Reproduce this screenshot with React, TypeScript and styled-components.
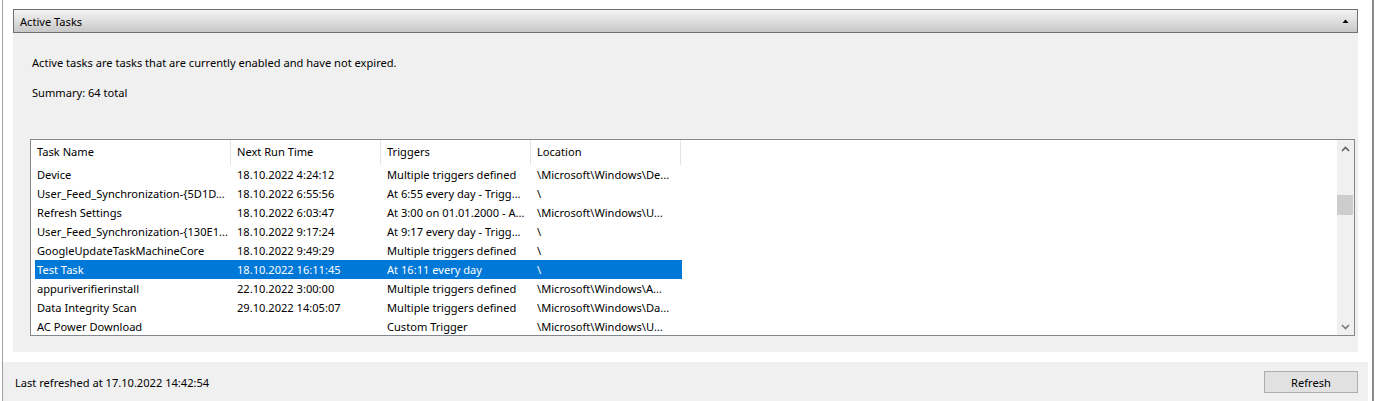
import React from 'react'
import styled, { createGlobalStyle } from 'styled-components'

const GlobalStyle = createGlobalStyle`
  html, body {
    margin: 0;
    padding: 0;
    background: #ffffff;
  }
  body {
    font-family: "Noto Sans", "Segoe UI", "Liberation Sans", sans-serif;
    font-size: 11.1px;
    color: #000000;
  }
  * {
    box-sizing: border-box;
  }
`

const Root = styled.div`
  display: flex;
  width: 1374px;
  height: 401px;
  padding-left: 2px;
  border-right: 2px solid #8c8c8c;
  background: #ffffff;
  overflow: hidden;
`

const Window = styled.div`
  display: flex;
  flex-direction: column;
  width: 1366px;
  height: 100%;
  border-left: 1px solid #a0a0a0;
`

const Main = styled.div`
  flex: 1;
  display: flex;
  padding: 9px 10px 10px 10px;
`

const Panel = styled.section`
  flex: 1;
  display: flex;
  flex-direction: column;
`

const PanelHeader = styled.div`
  display: flex;
  align-items: center;
  justify-content: space-between;
  height: 24px;
  padding: 0 8px 0 6px;
  border: 1px solid #6f6f6f;
  background: linear-gradient(to bottom, #f4f4f4 0%, #dedede 50%, #c8c8c8 100%);
`

const PanelBody = styled.div`
  flex: 1;
  display: flex;
  flex-direction: column;
  padding: 22px 3px 16px 17px;
  background: #f0f0f0;
`

const Note = styled.div<{ $gap?: number }>`
  padding-left: 2px;
  line-height: 16px;
  margin-bottom: ${({ $gap }) => $gap ?? 0}px;
`

const ListView = styled.div`
  display: flex;
  height: 197px;
  border: 1px solid #828790;
  background: #ffffff;
`

const ListContent = styled.div`
  flex: 1;
  overflow: hidden;
`

const HeaderRow = styled.div`
  display: grid;
  grid-template-columns: 200px 150px 150px 150px;
  height: 25px;
`

const HeaderCell = styled.div`
  display: flex;
  align-items: center;
  padding: 0 0 2px 6px;
  border-right: 1px solid #e5e5e5;
  white-space: nowrap;
`

const Row = styled.div<{ $selected?: boolean }>`
  display: grid;
  grid-template-columns: 195px 150px 150px 152px;
  width: 647px;
  height: 19px;
  margin-left: 4px;
  background: ${({ $selected }) => ($selected ? '#0078d7' : 'transparent')};
  color: ${({ $selected }) => ($selected ? '#ffffff' : '#000000')};
`

const Cell = styled.div<{ $first?: boolean }>`
  display: flex;
  align-items: center;
  padding-left: ${({ $first }) => ($first ? 2 : 7)}px;
  white-space: nowrap;
  overflow: hidden;
`

const ScrollBar = styled.div`
  display: flex;
  flex-direction: column;
  width: 17px;
  background: #f0f0f0;
`

const ScrollButton = styled.div`
  display: flex;
  align-items: center;
  justify-content: center;
  height: 17px;
`

const ScrollTrack = styled.div`
  flex: 1;
`

const Thumb = styled.div`
  width: 16px;
  height: 20px;
  margin-top: 38px;
  background: #cdcdcd;
`

const Footer = styled.footer`
  display: flex;
  align-items: center;
  justify-content: space-between;
  height: 39px;
  padding: 1px 10px 0 12px;
  background: #f0f0f0;
`

const Button = styled.button`
  width: 94px;
  height: 22px;
  padding: 0;
  border: 1px solid #adadad;
  background: #e1e1e1;
  font: inherit;
  color: #000000;
`

const rows = [
  ['Device', '18.10.2022 4:24:12', 'Multiple triggers defined', '\\Microsoft\\Windows\\De...'],
  ['User_Feed_Synchronization-{5D1D...', '18.10.2022 6:55:56', 'At 6:55 every day - Trigg...', '\\'],
  ['Refresh Settings', '18.10.2022 6:03:47', 'At 3:00 on 01.01.2000 - A...', '\\Microsoft\\Windows\\U...'],
  ['User_Feed_Synchronization-{130E1...', '18.10.2022 9:17:24', 'At 9:17 every day - Trigg...', '\\'],
  ['GoogleUpdateTaskMachineCore', '18.10.2022 9:49:29', 'Multiple triggers defined', '\\'],
  ['Test Task', '18.10.2022 16:11:45', 'At 16:11 every day', '\\'],
  ['appuriverifierinstall', '22.10.2022 3:00:00', 'Multiple triggers defined', '\\Microsoft\\Windows\\A...'],
  ['Data Integrity Scan', '29.10.2022 14:05:07', 'Multiple triggers defined', '\\Microsoft\\Windows\\Da...'],
  ['AC Power Download', '', 'Custom Trigger', '\\Microsoft\\Windows\\U...'],
]

const columns = ['Task Name', 'Next Run Time', 'Triggers', 'Location']

const SELECTED = 5

const App = () => {
  return (
    <>
      <GlobalStyle />
      <Root>
        <Window>
          <Main>
            <Panel>
              <PanelHeader>
                <span>Active Tasks</span>
                <svg width="7" height="4" viewBox="0 0 7 4">
                  <path d="M3.5 0.5 L6.5 4 L0.5 4 Z" fill="#000000" />
                </svg>
              </PanelHeader>
              <PanelBody>
                <Note $gap={14}>Active tasks are tasks that are currently enabled and have not expired.</Note>
                <Note $gap={38}>Summary: 64 total</Note>
                <ListView>
                  <ListContent>
                    <HeaderRow>
                      {columns.map((c) => (
                        <HeaderCell key={c}>{c}</HeaderCell>
                      ))}
                    </HeaderRow>
                    {rows.map((r, i) => (
                      <Row key={i} $selected={i === SELECTED}>
                        {r.map((v, j) => (
                          <Cell key={j} $first={j === 0}>
                            {v}
                          </Cell>
                        ))}
                      </Row>
                    ))}
                  </ListContent>
                  <ScrollBar>
                    <ScrollButton>
                      <svg width="9" height="6" viewBox="0 0 9 6">
                        <path d="M1 5 L4.5 1.5 L8 5" fill="none" stroke="#606060" strokeWidth="1.6" />
                      </svg>
                    </ScrollButton>
                    <ScrollTrack>
                      <Thumb />
                    </ScrollTrack>
                    <ScrollButton>
                      <svg width="9" height="6" viewBox="0 0 9 6">
                        <path d="M1 1 L4.5 4.5 L8 1" fill="none" stroke="#7a7a7a" strokeWidth="1.6" />
                      </svg>
                    </ScrollButton>
                  </ScrollBar>
                </ListView>
              </PanelBody>
            </Panel>
          </Main>
          <Footer>
            <span>Last refreshed at 17.10.2022 14:42:54</span>
            <Button>Refresh</Button>
          </Footer>
        </Window>
      </Root>
    </>
  )
}

export default App
